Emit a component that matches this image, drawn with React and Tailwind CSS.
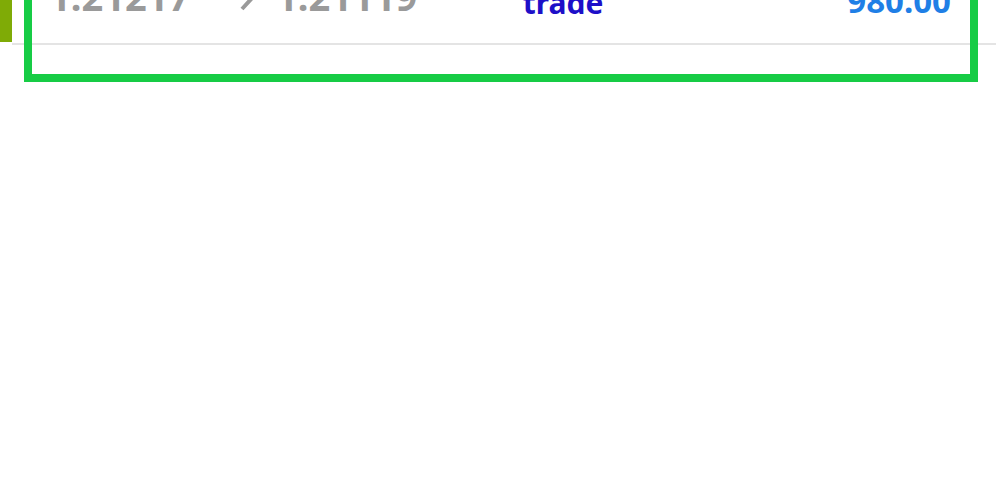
import React from 'react';

// Cropped trade row with a highlight frame drawn over it
const App = () => {
  return (
    <div className="relative w-[996px] h-[480px] bg-white overflow-hidden" style={{ fontFamily: '"Noto Sans", "Open Sans", sans-serif' }}>
      <div className="flex">
        <div className="w-[12px] h-[42px] bg-[#7fab06]"></div>
        <div className="flex-1 h-[45px] border-b-2 border-[#e4e4e4] flex items-end pb-[25px] pl-[37px] pr-[45px] font-bold leading-none">
          <div className="w-[471px] flex items-baseline text-[#9a9a9a] text-[38px] mb-[3px]">
            <span>1.21217</span>
            <svg width="16" height="24" viewBox="0 0 16 24" className="ml-[50px] mr-[20px]">
              <polyline points="2,-2 13,10 2,22" fill="none" stroke="#9a9a9a" strokeWidth="4" />
            </svg>
            <span>1.21119</span>
          </div>
          <div className="w-[86px] text-center text-[#1d0fc8] text-[30px]">trade</div>
          <div className="flex-1 text-right text-[#1f7fe6] text-[33px] mb-[1px]">980.00</div>
        </div>
      </div>
      <div className="absolute left-[24px] top-[-20px] w-[954px] h-[102px] border-8 border-[#17cc45]"></div>
    </div>
  );
};

export default App;
